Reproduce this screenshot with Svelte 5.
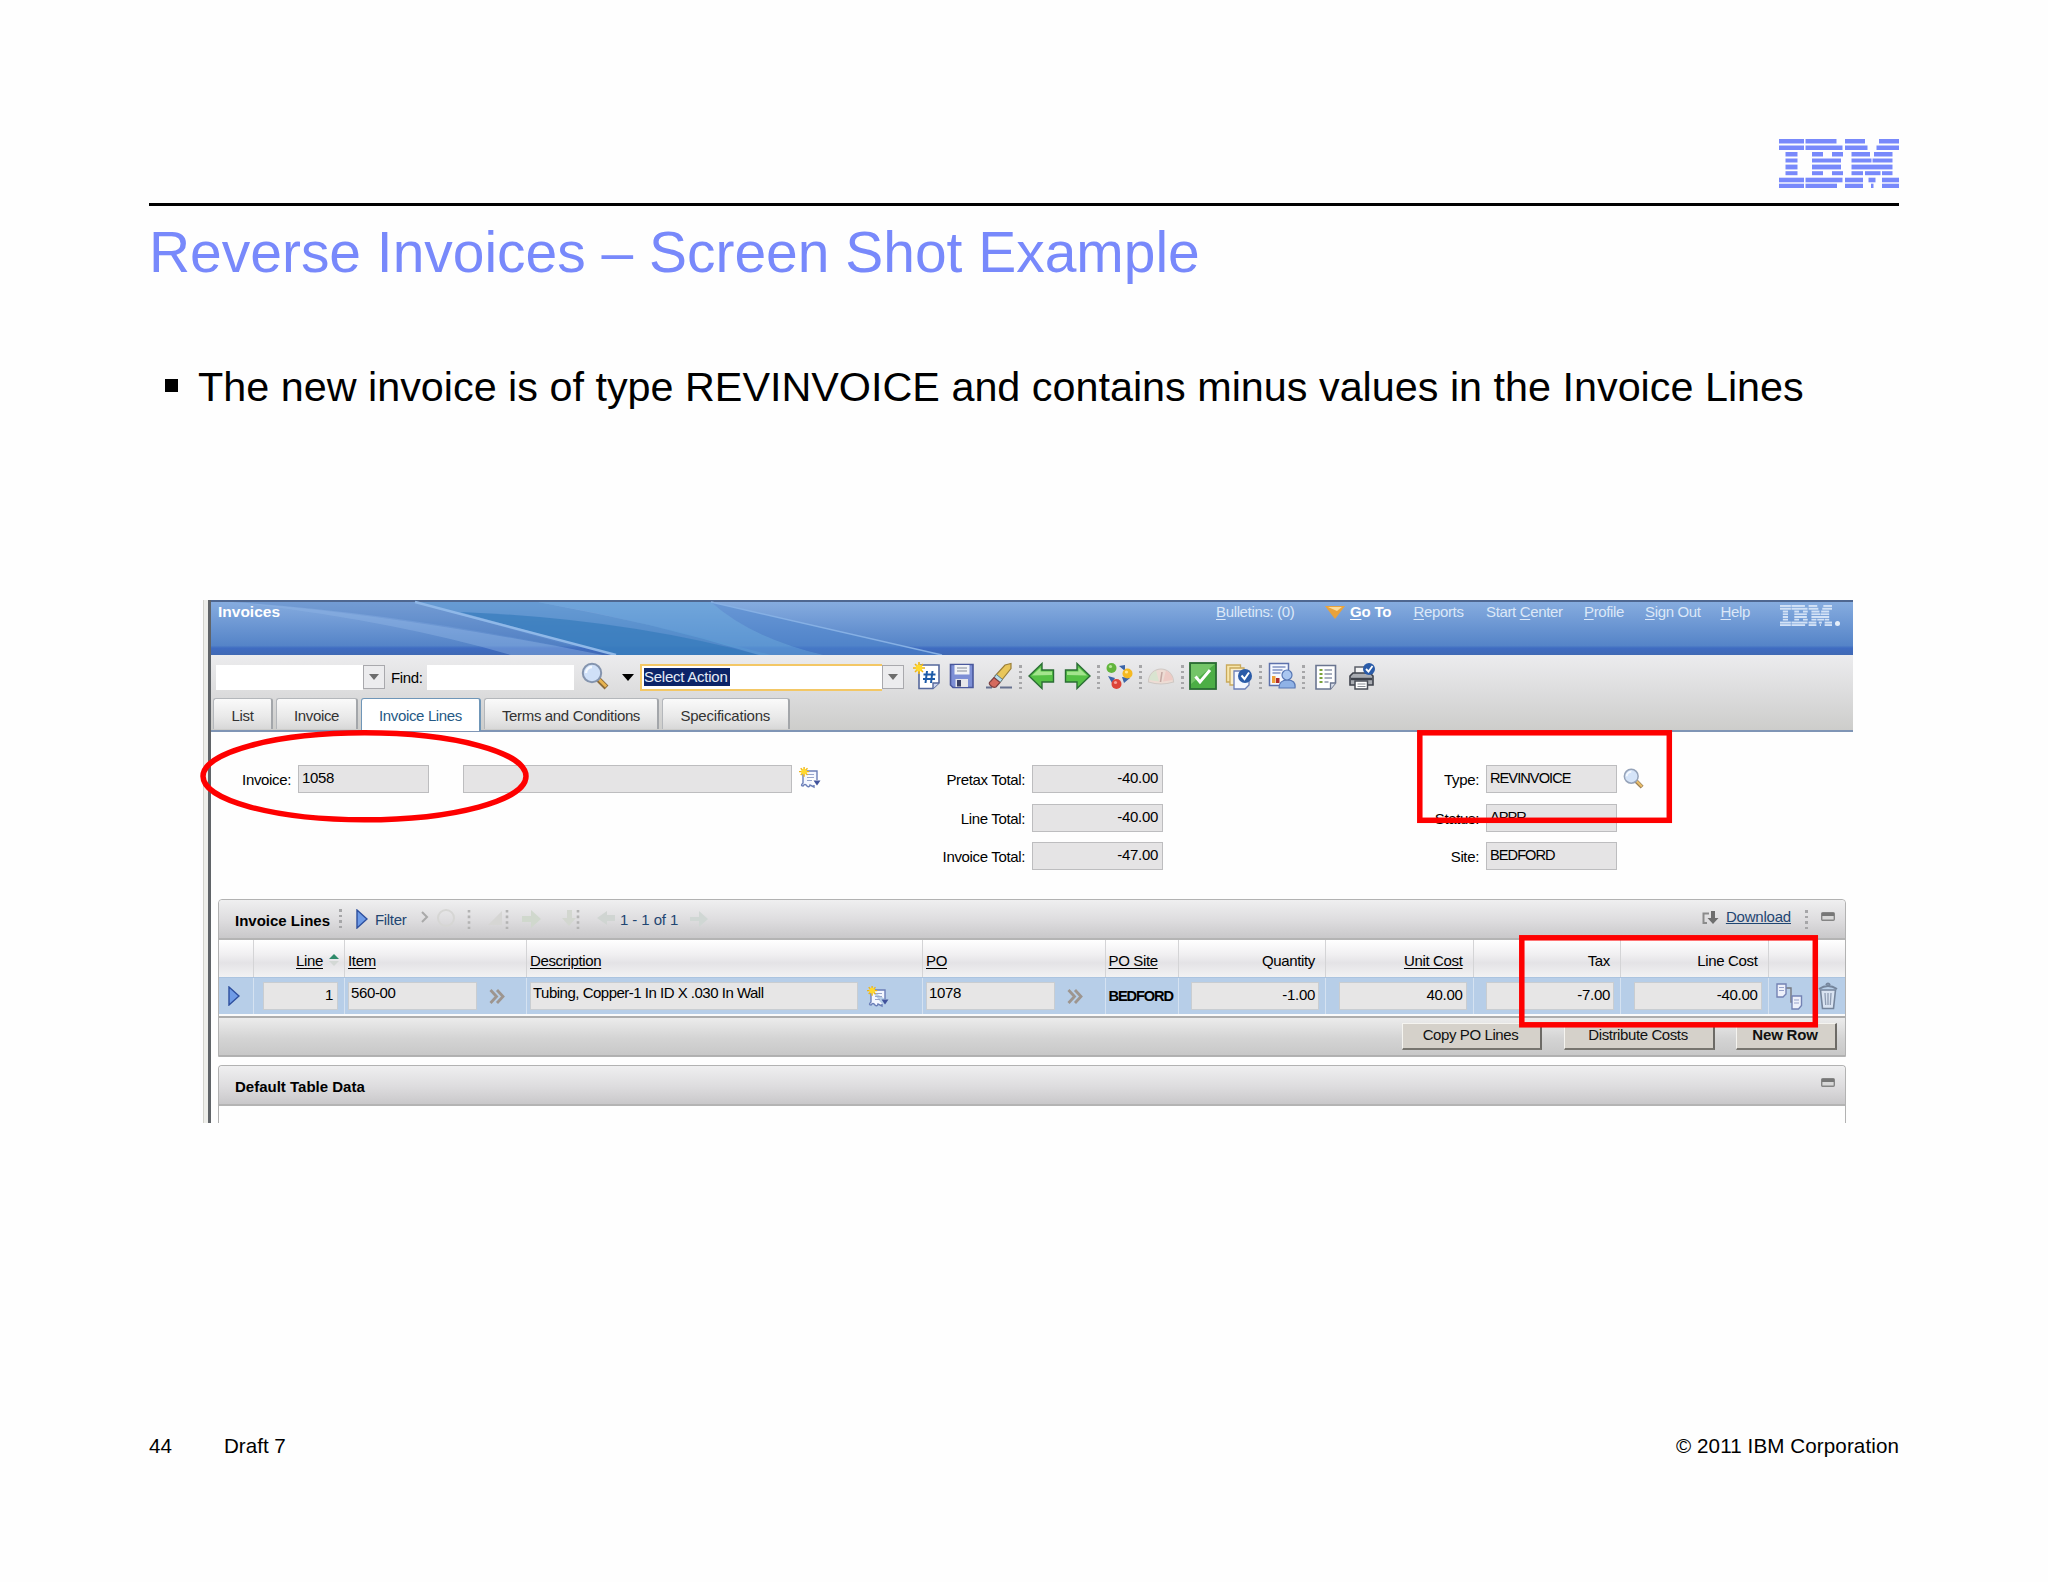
<script>
  const nav = [
    { key: "B", rest: "ulletins: (0)" },
    { key: "G", rest: "o To", bold: true },
    { key: "R", rest: "eports" },
    { pre: "Start ", key: "C", rest: "enter" },
    { key: "P", rest: "rofile" },
    { key: "S", rest: "ign Out" },
    { key: "H", rest: "elp" },
  ];

  const tools = [
    "new",
    "save",
    "eraser",
    "sep",
    "back",
    "forward",
    "sep",
    "workflow",
    "sep",
    "gauge",
    "sep",
    "check",
    "stack",
    "sep",
    "report",
    "sep",
    "list",
    "print",
  ];

  const tabs = [
    { label: "List", size: "w-list" },
    { label: "Invoice", size: "w-invoice" },
    { label: "Invoice Lines", size: "w-lines", active: true },
    { label: "Terms and Conditions", size: "w-terms" },
    { label: "Specifications", size: "w-spec" },
  ];

  const totals = [
    { label: "Pretax Total:", value: "-40.00" },
    { label: "Line Total:", value: "-40.00" },
    { label: "Invoice Total:", value: "-47.00" },
  ];

  const details = [
    { label: "Type:", value: "REVINVOICE", lookup: true },
    { label: "Status:", value: "APPR" },
    { label: "Site:", value: "BEDFORD" },
  ];

  // eight stripes of the logo, as [x, width] runs
  const stripes = [
    { y: 0, h: 4.5, runs: [[0, 25], [26.5, 31], [66, 20], [100, 20]] },
    { y: 6.5, h: 4.5, runs: [[0, 25], [26.5, 37], [66, 22.5], [97.5, 22.5]] },
    { y: 13, h: 4.5, runs: [[6.5, 12], [33, 11], [53, 11], [72.5, 18.5], [95, 18.5]] },
    { y: 19.5, h: 4, runs: [[6.5, 12], [33, 29], [72.5, 20], [93.5, 20]] },
    { y: 25.6, h: 4.8, runs: [[6.5, 12], [33, 29], [72.5, 41]] },
    { y: 32.2, h: 4, runs: [[6.5, 12], [33, 11], [53, 11], [72.5, 11.5], [86, 15.5], [103, 10.5]] },
    { y: 38.7, h: 4.6, runs: [[0, 25], [26.5, 37], [66, 18], [89.5, 7], [103, 17]] },
    { y: 44.7, h: 4.3, runs: [[0, 25], [26.5, 31.5], [66, 18], [92, 2.5], [103, 17]] },
  ];
</script>

{#snippet ibm()}
  <svg class="ibm" viewBox="0 0 120 49" preserveAspectRatio="none">
    {#each stripes as s}
      {#each s.runs as [x, w]}
        <rect {x} y={s.y} width={w} height={s.h} />
      {/each}
    {/each}
  </svg>
{/snippet}

{#snippet star()}
  <path d="M6 0v12M0 6h12M2 2l8 8M10 2l-8 8" stroke="#f0b414" stroke-width="1.6" />
  <circle cx="6" cy="6" r="3.4" fill="#ffd92e" />
{/snippet}

{#snippet note()}
  <svg class="note" viewBox="0 0 22 22">
    <path d="M4 4h14v9M4 4v12q-3 3 0 3q2-3 4 0q2 2 3-1l4 2v-2" fill="#f4f7ff" stroke="#6b7fb8" stroke-width="1.4" />
    <path d="M8 7.5h7M8 10.5h7M8 13.5h5" stroke="#98a6cc" stroke-width="1.2" />
    <path d="M14.500 13.500h7l-3.500 5z" fill="#41539c" />
    <g transform="translate(0 -0.5) scale(.85)">{@render star()}</g>
  </svg>
{/snippet}

{#snippet lens()}
  <svg class="lens" viewBox="0 0 28 28">
    <path d="M17 17l8.5 8.5" stroke="#8a6a3a" stroke-width="5.4" />
    <path d="M17.6 17l7.6 7.6" stroke="#e8b450" stroke-width="2.8" />
    <circle cx="11" cy="11" r="9.2" fill="#cfe0f8" stroke="#8494ae" stroke-width="2" />
    <path d="M5 11a6 6 0 0 1 6-6" stroke="#f4f9ff" stroke-width="2.4" fill="none" />
  </svg>
{/snippet}

{#snippet chevrons()}
  <svg class="chevrons" viewBox="0 0 16 15">
    <path d="M1.5 1l6 6.5-6 6.5M8 1l6 6.5-6 6.5" fill="none" stroke="#9d958f" stroke-width="2.8" />
  </svg>
{/snippet}

{#snippet play()}
  <svg class="play" viewBox="0 0 12 20">
    <path d="M1 1l10 9-10 9z" fill="#6f9be6" stroke="#2d4f9e" stroke-width="1.4" />
  </svg>
{/snippet}

{#snippet minimize()}
  <svg class="minimize" viewBox="0 0 14 9">
    <rect x=".7" y=".7" width="12.6" height="7.6" rx="1" fill="#d8d8d8" stroke="#858585" stroke-width="1.4" />
    <path d="M1 2.5h12" stroke="#777" stroke-width="3" />
  </svg>
{/snippet}

{#snippet arrow()}
  <path d="M1 14L14 1.5V8h11.5v12H14v6.5z" fill="#55c145" stroke="#2b6e35" stroke-width="1.4" />
  <path d="M4 13.5L12.6 5.5V9.5H24v3.5z" fill="#a4e48e" />
{/snippet}

{#snippet tool(name)}
  {#if name === "sep"}
    <span class="sep"></span>
  {:else}
    <svg class="tool {name}" viewBox="0 0 28 28">
      {#if name === "new"}
        <path d="M6 3h20v18l-6 5.5H6z" fill="#fff" stroke="#56689c" stroke-width="1.6" />
        <path d="M26 21h-6v5.5" fill="#cdd7f0" stroke="#56689c" stroke-width="1.4" />
        <path d="M14 9l-1.5 12M19.5 9L18 21M10.5 12.5h12M10 17h12" stroke="#1c5aa8" stroke-width="2" />
        {@render star()}
      {:else if name === "save"}
        <path d="M2.5 2.5h22.5v23H5l-2.500-2.500z" fill="#7d8fd6" stroke="#4a589c" stroke-width="1.6" />
        <path d="M6.5 3h15v9.5h-15z" fill="#f1f3f6" />
        <path d="M9 6h10M9 9h10" stroke="#a9afb8" stroke-width="1.4" />
        <path d="M7.5 17h12.5v8H7.5z" fill="#e6e6ea" />
        <path d="M9 18h4v6.5H9z" fill="#3c4368" />
      {:else if name === "eraser"}
        <path d="M1 25.5h6M15 25.5h12" stroke="#66718f" stroke-width="2" />
        <path d="M20 3l6-1.5v5L16 19l-6-5z" fill="#e9c65a" stroke="#9a7f3a" stroke-width="1.2" />
        <path d="M11.5 12.5l6 5-2.5 3-6-5z" fill="#b9dcea" stroke="#5b7a8a" stroke-width="1" />
        <path d="M9 15.5l6 5-4 4.5q-3 1-5.500-1.500t0-4z" fill="#d56a5e" stroke="#7d4040" stroke-width="1.2" />
      {:else if name === "back"}
        {@render arrow()}
      {:else if name === "forward"}
        <g transform="matrix(-1 0 0 1 28 0)">{@render arrow()}</g>
      {:else if name === "workflow"}
        <path d="M14 4l6 5V3zM3 14l4 7 3-5zM19 21l6-5-8-1z" fill="#3b64a8" />
        <circle cx="6.5" cy="6" r="5" fill="#62b53c" />
        <circle cx="22.5" cy="11.5" r="5" fill="#f5b921" />
        <circle cx="11.5" cy="22" r="5" fill="#dc4338" />
        <circle cx="5.5" cy="4.5" r="1.6" fill="#b7e69a" />
        <circle cx="21.5" cy="10" r="1.6" fill="#ffe795" />
        <circle cx="10.5" cy="20.5" r="1.6" fill="#f7a199" />
      {:else if name === "gauge"}
        <path d="M1.5 20a12.5 13 0 0 1 25 0q-12.500 4-25 0z" fill="#eddcd4" stroke="#cfc8c4" stroke-width="1.2" />
        <path d="M2 18a12 12 0 0 1 7-9.500l3 11z" fill="#d9e4d0" />
        <path d="M19 8.500a12 12 0 0 1 7 9.500l-10 1.500z" fill="#edcbc5" />
        <path d="M13.5 20l1.500-10" stroke="#c5a9a4" stroke-width="1.6" />
      {:else if name === "check"}
        <rect x="1" y="1" width="26" height="26" fill="#4cae45" stroke="#2b6b33" stroke-width="1.8" />
        <path d="M2 2h24L2 22z" fill="#74c568" />
        <path d="M6.5 14.500l4.500 5.500L21 8" fill="none" stroke="#fff" stroke-width="3" />
      {:else if name === "stack"}
        <path d="M1.5 3h14v17h-14z" fill="#f7e6ab" stroke="#c9a95c" stroke-width="1.3" />
        <path d="M5 6h14v17H5z" fill="#faeeca" stroke="#c9a95c" stroke-width="1.3" />
        <path d="M9 9h15v14l-4 4H9z" fill="#f4f7ff" stroke="#6b7fb8" stroke-width="1.3" />
        <circle cx="20" cy="14" r="7" fill="#2a5ba8" />
        <path d="M16.5 13.5l3 3.500 4.500-6.500" fill="none" stroke="#fff" stroke-width="2" />
      {:else if name === "report"}
        <path d="M1.5 1.5h19v22h-19z" fill="#f5f8ff" stroke="#5d71ac" stroke-width="1.5" />
        <path d="M4.5 5h13M4.5 8h10M4.5 11h8" stroke="#8091c2" stroke-width="1.5" />
        <path d="M4 14h3.500v7H4z" fill="#efa13a" />
        <path d="M8 16h3.500v5H8z" fill="#b02b2b" />
        <path d="M11 26q0-8 8.500-8t7.500 8z" fill="#8fb2e6" stroke="#5676b4" stroke-width="1.2" />
        <circle cx="19" cy="13" r="5" fill="#a9c6f0" stroke="#5676b4" stroke-width="1.2" />
      {:else if name === "list"}
        <path d="M4 3.5h19.5V21l-5 6H4z" fill="#fff" stroke="#6a7590" stroke-width="1.6" />
        <path d="M23.5 21h-5v6" fill="#d8deea" stroke="#6a7590" stroke-width="1.3" />
        <path d="M7.5 8h3M7.5 12h3M7.5 16h3M7.5 20h3" stroke="#7aa23c" stroke-width="2.2" />
        <path d="M12.5 8h7.500M12.5 12h7.500M12.5 16h7.500M12.5 20h4" stroke="#8d96ac" stroke-width="1.5" />
      {:else if name === "print"}
        <path d="M7 12V5h12v7" fill="#f5f5f5" stroke="#5b5f68" stroke-width="1.5" />
        <path d="M2 14l3-3h17l3 3v9H2z" fill="#a9acb2" stroke="#3f434c" stroke-width="1.6" />
        <path d="M3 17h21" stroke="#3f434c" stroke-width="2.4" />
        <path d="M7 19h12.500v8H7z" fill="#fff" stroke="#4a4e57" stroke-width="1.5" />
        <path d="M9.5 22h8M9.5 24.500h8" stroke="#8b8f97" stroke-width="1.2" />
        <circle cx="21" cy="7" r="6" fill="#2a5ba8" />
        <path d="M18 7l2.500 2.500 4-5.500" fill="none" stroke="#fff" stroke-width="1.8" />
      {/if}
    </svg>
  {/if}
{/snippet}

<main class="slide">
  <div class="brand">{@render ibm()}</div>
  <div class="rule"></div>
  <h1>Reverse Invoices – Screen Shot Example</h1>
  <div class="bullet">
    <span class="square"></span>
    <p>The new invoice is of type REVINVOICE and contains minus values in the Invoice Lines</p>
  </div>

  <div class="shot">
    <div class="edge"></div>
    <div class="window">
      <header>
        <svg class="swoosh" viewBox="0 0 1642 55" preserveAspectRatio="none">
          <path d="M22 2Q190 15 392 55H300Q180 20 22 2z" fill="#8fb4e4" opacity=".45" />
          <path d="M22 2H204L392 55Q200 14 22 2z" fill="#4a76b8" opacity=".3" />
          <path d="M204 2H327Q444 24 560 55H405z" fill="#4f8ecb" opacity=".55" />
          <path d="M249 12Q410 18 548 55H405z" fill="#3279ba" opacity=".65" />
          <path d="M327 2H500Q540 38 613 55H548Q440 22 327 2z" fill="#62a2d8" opacity=".6" />
          <path d="M500 2L731 55H613Q540 38 500 2z" fill="#4b84cb" opacity=".5" />
          <path d="M204 2L405 55" stroke="#8fb8e8" stroke-width="2.5" />
          <path d="M500 2L731 55" fill="none" stroke="#86b0e4" stroke-width="1.5" />
        </svg>
        <strong>Invoices</strong>
        <nav>
          {#each nav as item}
            <a href="/" class:goto={item.bold}>
              {#if item.bold}
                <svg viewBox="0 0 20 14"><path d="M0 0h20L10 13z" fill="#e9a23b" /><path d="M3 1h14l-5 4z" fill="#fbdc9b" /></svg>
              {/if}
              <span>{item.pre ?? ""}<u>{item.key}</u>{item.rest}</span>
            </a>
          {/each}
        </nav>
        <div class="mini-brand">{@render ibm()}<i></i></div>
      </header>

      <div class="toolbar">
        <div class="row">
          <span class="combo query"><i></i><b></b></span>
          <label for="find">Find:</label>
          <span class="find" id="find"></span>
          {@render lens()}
          <span class="caret"></span>
          <span class="combo action"><i><mark>Select Action</mark></i><b></b></span>
          <div class="tools">
            {#each tools as name}
              {@render tool(name)}
            {/each}
          </div>
        </div>
        <div class="tabs">
          {#each tabs as tab}
            <div class="tab {tab.size}" class:active={tab.active}>{tab.label}</div>
          {/each}
        </div>
      </div>

      <section class="form">
        <div class="group first">
          <span class="label">Invoice:</span>
          <span class="field">1058</span>
          <span class="field long"></span>
          {@render note()}
        </div>
        <div class="group second">
          {#each totals as t}
            <div class="line">
              <span class="label">{t.label}</span>
              <span class="field num">{t.value}</span>
            </div>
          {/each}
        </div>
        <div class="group third">
          {#each details as d}
            <div class="line">
              <span class="label">{d.label}</span>
              <span class="field caps">{d.value}</span>
              {#if d.lookup}{@render lens()}{/if}
            </div>
          {/each}
        </div>
      </section>

      <section class="panel">
        <div class="bar">
          <strong>Invoice Lines</strong>
          <span class="sep s1"></span>
          {@render play()}
          <span class="filter">Filter</span>
          <svg class="ghosts" viewBox="0 0 200 28">
            <path d="M2 7l5 5-5 5" fill="none" stroke="#a9a9a9" stroke-width="2" />
            <circle cx="26" cy="13" r="8" fill="none" stroke="#d6d6d4" stroke-width="2" />
            <path d="M68 20L82 6v14z" fill="#d6d6d4" />
            <path d="M102 11h9V5l10 9-10 9v-6h-9z" fill="#d0d8cd" />
            <path d="M142 13h5V5h5v8h4l-7 8z" fill="#d3d7d0" />
            <path d="M177 13l10-7v4h8v6h-8v4z" fill="#d0d5d2" />
            <path d="M49 5v19M87 5v19M158 5v19" stroke="#b3b3b3" stroke-width="2.6" stroke-dasharray="2.6 3" />
          </svg>
          <span class="count">1 - 1 of 1</span>
          <svg class="next" viewBox="0 0 20 20">
            <path d="M0 8h9V2l9 8-9 8v-6H0z" fill="#d0d7d4" />
          </svg>
          <div class="right">
            <svg class="dl" viewBox="0 0 17 14">
              <path d="M7 2.5H1.5v9.500H5" fill="none" stroke="#8b8b8b" stroke-width="2" />
              <path d="M9 0h4v7h3.500l-5.500 6-5.500-6H9z" fill="#6e6e6e" />
            </svg>
            <a href="/">Download</a>
            <span class="sep"></span>
            {@render minimize()}
          </div>
        </div>

        <div class="grid head">
          <span></span>
          <span class="end line-col"><u>Line</u>
            <svg viewBox="0 0 12 14"><path d="M6 1l5 5H1z" fill="#2f8a6a" /><path d="M6 13l5-5H1z" fill="#d3d8d5" /></svg>
          </span>
          <span><u>Item</u></span>
          <span><u>Description</u></span>
          <span><u>PO</u></span>
          <span><u>PO Site</u></span>
          <span class="end">Quantity</span>
          <span class="end"><u>Unit Cost</u></span>
          <span class="end">Tax</span>
          <span class="end">Line Cost</span>
          <span></span>
        </div>
        <div class="grid data">
          <span class="mark">{@render play()}</span>
          <span class="end narrow"><em class="cell">1</em></span>
          <span><em class="cell ref">560-00</em>{@render chevrons()}</span>
          <span><em class="cell desc">Tubing, Copper-1 In ID X .030 In Wall</em>{@render note()}</span>
          <span><em class="cell ref">1078</em>{@render chevrons()}</span>
          <span><strong>BEDFORD</strong></span>
          <span class="end"><em class="cell num">-1.00</em></span>
          <span class="end"><em class="cell num">40.00</em></span>
          <span class="end"><em class="cell num">-7.00</em></span>
          <span class="end"><em class="cell num">-40.00</em></span>
          <span class="actions">
            <svg class="docs" viewBox="0 0 27 27">
              <path d="M10 5h5v14h3" fill="none" stroke="#76787f" stroke-width="1.4" />
              <path d="M1 1h9v10l-3 3H1z" fill="#eef1fb" stroke="#7483b4" stroke-width="1.4" />
              <path d="M16 13h9.500v9.500l-3 3.500H16z" fill="#eef1fb" stroke="#7483b4" stroke-width="1.4" />
              <path d="M3 4.500h5M3 7.500h5M18 17h5M18 20h5" stroke="#98a4cc" stroke-width="1.2" />
            </svg>
            <svg class="trash" viewBox="0 0 20 28">
              <path d="M2.5 8h15l-2 18.500h-11z" fill="#d9e3f1" stroke="#75859c" stroke-width="1.6" />
              <path d="M1 7q9-6 18 0M8 3q2-3 4 0" fill="none" stroke="#75859c" stroke-width="2" />
              <path d="M7 11l.7 12M10 11v12M13 11l-.7 12" stroke="#8f9db3" stroke-width="1.3" />
            </svg>
          </span>
        </div>
        <div class="buttons">
          <button class="copy">Copy PO Lines</button>
          <button class="distribute">Distribute Costs</button>
          <button class="new-row">New Row</button>
        </div>
      </section>

      <section class="panel empty">
        <div class="bar">
          <strong>Default Table Data</strong>
          <div class="right">{@render minimize()}</div>
        </div>
      </section>
    </div>

    <svg class="callouts" viewBox="0 0 1660 540">
      <ellipse cx="166.5" cy="176.3" rx="161.5" ry="43.5" />
      <rect x="1221.8" y="132.8" width="249.5" height="87.5" />
      <rect x="1323.8" y="337.8" width="293.5" height="87" />
    </svg>
  </div>

  <footer>
    <span class="page">44</span>
    <span>Draft 7</span>
    <span class="copyright">© 2011 IBM Corporation</span>
  </footer>
</main>

<style>
  :global(body) {
    margin: 0;
    background: #fefefe;
  }

  .slide {
    box-sizing: border-box;
    width: 2048px;
    height: 1582px;
    padding: 139px 149px 0;
    overflow: hidden;
    font-family: "Liberation Sans", Arial, sans-serif;
    color: #000;
  }

  .slide :global(svg) {
    display: block;
    flex: none;
  }

  .brand {
    display: flex;
    justify-content: flex-end;
    height: 49px;
  }

  .ibm {
    width: 120px;
    height: 49px;
    fill: #7889fb;
  }

  .rule {
    height: 3px;
    margin-top: 15px;
    background: #000;
  }

  h1 {
    margin: 14px 0 0;
    font-size: 56.95px;
    line-height: 64px;
    font-weight: 400;
    color: #7889fb;
    white-space: nowrap;
  }

  .bullet {
    display: flex;
    margin-top: 79px;
    padding-left: 16px;
  }

  .bullet .square {
    width: 13px;
    height: 13px;
    margin: 16px 20px 0 0;
    background: #000;
  }

  .bullet p {
    margin: 0;
    font-size: 41.33px;
    line-height: 48px;
    white-space: nowrap;
  }

  .shot {
    position: relative;
    display: flex;
    width: 1650px;
    height: 523px;
    margin: 189px 0 0 54px;
    font-size: 15px;
    letter-spacing: -0.35px;
    white-space: nowrap;
  }

  .edge {
    box-sizing: border-box;
    width: 8px;
    background: #eeeeea;
    border-left: 1px solid #d2d2cc;
    border-right: 3px solid #606468;
  }

  .window {
    flex: 1;
    min-width: 0;
    overflow: hidden;
    background: #fefefe;
  }

  header {
    position: relative;
    box-sizing: border-box;
    display: flex;
    height: 55px;
    line-height: 19px;
    color: #dbe8f8;
    border-top: 2px solid #4f6790;
    background: linear-gradient(#86acdf, #5584c8 82%, #3f6cc2 87%, #4069b4);
  }

  .swoosh {
    position: absolute;
    left: 0;
    top: -2px;
    width: 1642px;
    height: 55px;
  }

  header strong {
    position: relative;
    width: 998px;
    padding-left: 7px;
    font-size: 15.5px;
    letter-spacing: 0;
    color: #fff;
  }

  nav {
    position: relative;
    display: grid;
    grid-template-columns: 109px 88.5px 72.5px 98px 61px 75.5px 59px;
  }

  nav a {
    display: flex;
    color: inherit;
    text-decoration: none;
  }

  nav svg {
    width: 20px;
    height: 14px;
    margin: 4px 5px 0 0;
  }

  .goto {
    font-weight: bold;
    color: #fff;
    letter-spacing: -0.2px;
  }

  .mini-brand {
    position: relative;
    display: flex;
    align-items: flex-end;
    height: 24px;
  }

  .mini-brand .ibm {
    width: 52px;
    height: 21px;
    fill: #d3e2f6;
  }

  .mini-brand i {
    width: 5px;
    height: 5px;
    margin-left: 3px;
    border-radius: 50%;
    background: #e6effa;
  }

  .toolbar {
    box-sizing: border-box;
    height: 77px;
    padding: 4px 0 0 2px;
    border-bottom: 2px solid #7f95b5;
    background: linear-gradient(#ececee, #dededf 45%, #cdcdcb);
  }

  .row {
    display: flex;
    align-items: center;
    height: 39px;
    padding-left: 3px;
  }

  .row > * {
    flex: none;
    margin-bottom: 3px;
  }

  .combo {
    display: flex;
  }

  .combo i {
    box-sizing: border-box;
    height: 25px;
    background: #fff;
    font-style: normal;
  }

  .combo b {
    box-sizing: border-box;
    display: flex;
    width: 22px;
    height: 24px;
    align-items: center;
    justify-content: center;
    border: 1px solid #a9a9ad;
    background: #ececee;
  }

  .combo b::after {
    content: "";
    border: 5px solid transparent;
    border-top: 6px solid #6d6d6d;
    border-bottom: 0;
  }

  .query i {
    width: 147px;
  }

  .row label {
    box-sizing: border-box;
    width: 42px;
    padding: 1px 0 0 6px;
  }

  .find {
    width: 147px;
    height: 25px;
    background: #fff;
  }

  .lens {
    width: 28px;
    height: 28px;
  }

  .row .lens {
    margin-left: 7px;
    margin-bottom: 5px;
  }

  .caret {
    margin-left: 13px;
    border: 6.5px solid transparent;
    border-top: 7px solid #000;
    border-bottom: 0;
  }

  .action {
    margin-left: 6px;
  }

  .action i {
    width: 242px;
    height: 27px;
    padding: 2px 0 0 2px;
    border: 2px solid #f3c765;
    border-right: 0;
  }

  .action b {
    margin-top: 1px;
  }

  mark {
    display: block;
    width: 86px;
    height: 18px;
    line-height: 18px;
    color: #e4ebf6;
    background: #0c2468;
    letter-spacing: -0.25px;
  }

  .tools {
    display: flex;
    align-items: center;
    margin: 0 0 6px 9px;
  }

  .tool {
    width: 28px;
    height: 28px;
  }

  .sep {
    width: 3px;
    height: 24px;
    background: repeating-linear-gradient(#a6a6a8 0 2.5px, transparent 2.5px 5.5px);
  }

  .tools .sep {
    margin: 2px 6px 0;
  }

  .save {
    margin-left: 7px;
  }

  .eraser {
    margin-left: 9px;
  }

  .forward {
    margin-left: 7px;
  }

  .stack {
    margin-left: 8px;
  }

  .workflow,
  .gauge,
  .check {
    margin-left: -1px;
  }

  .list {
    margin-left: 1px;
  }

  .print {
    margin-left: 8px;
  }

  .tabs {
    display: flex;
    gap: 3px;
    height: 33px;
  }

  .tab {
    box-sizing: border-box;
    height: 31px;
    padding-top: 7px;
    text-align: center;
    line-height: 20px;
    color: #333;
    border: 1px solid #b4b7bb;
    border-right: 2px solid #a3a6aa;
    border-bottom: 0;
    border-radius: 3px 3px 0 0;
    background: linear-gradient(#fafafa, #e9e9e9 60%, #d8d8d8);
  }

  .tab.active {
    height: 33px;
    color: #255a86;
    border-color: #6f96b8;
    background: #fff;
  }

  .w-list {
    width: 60px;
  }

  .w-invoice {
    width: 82px;
  }

  .w-lines {
    width: 120px;
  }

  .w-terms {
    width: 175px;
  }

  .w-spec {
    width: 127.5px;
    letter-spacing: -0.2px;
  }

  .form {
    display: flex;
    height: 167px;
    padding-top: 33px;
    box-sizing: border-box;
  }

  .group {
    display: flex;
    align-items: flex-start;
  }

  .label {
    box-sizing: border-box;
    padding-top: 5px;
    text-align: right;
    line-height: 20px;
  }

  .field {
    box-sizing: border-box;
    width: 131px;
    height: 28px;
    margin-left: 7px;
    padding: 2px 4px 0 3px;
    line-height: 20px;
    border: 1px solid #bdbdbf;
    background: #e5e4e5;
  }

  .first {
    width: 721px;
  }

  .first .label {
    width: 80px;
  }

  .long {
    width: 329px;
    margin-left: 34px;
  }

  .note {
    width: 22px;
    height: 22px;
    margin: 2px 0 0 7px;
  }

  .second,
  .third {
    flex-direction: column;
    gap: 10.6px;
  }

  .line {
    display: flex;
  }

  .second {
    width: 498px;
  }

  .second .label {
    width: 93px;
  }

  .third .label {
    width: 49px;
  }

  .caps {
    font-size: 14.6px;
    letter-spacing: -0.95px;
  }

  .num {
    text-align: right;
    letter-spacing: -0.3px;
  }

  .third .lens {
    width: 21px;
    height: 21px;
    margin: 3px 0 0 6px;
    opacity: 0.85;
  }

  .panel {
    box-sizing: border-box;
    width: 1628px;
    margin-left: 7px;
    border: 1px solid #b2b2b2;
    border-radius: 4px 4px 0 0;
  }

  .bar {
    box-sizing: border-box;
    display: flex;
    height: 40px;
    padding: 0 10px 0 16px;
    align-items: center;
    border-bottom: 2px solid #b4b4b4;
    border-radius: 4px 4px 0 0;
    background: linear-gradient(#efeff0, #dddcde 55%, #c9c8ca);
  }

  .bar strong {
    padding-top: 3px;
    letter-spacing: 0;
  }

  .s1 {
    height: 20px;
    margin: 0 14px 0 9px;
  }

  .play {
    width: 12px;
    height: 20px;
  }

  .filter,
  .count {
    color: #1f4672;
  }

  .filter {
    width: 31px;
    margin: 0 14px 0 7px;
  }

  .ghosts {
    width: 200px;
    height: 28px;
  }

  .count {
    width: 62px;
    letter-spacing: -0.1px;
  }

  .next {
    width: 20px;
    height: 20px;
    margin-left: 8px;
  }

  .right {
    display: flex;
    margin-left: auto;
    align-items: center;
    padding-bottom: 6px;
  }

  .right a {
    margin: 0 14px 0 7px;
    color: #1f4672;
    letter-spacing: -0.2px;
  }

  .right .sep {
    margin: 7px 13px 0 0;
    height: 20px;
  }

  .dl {
    width: 17px;
    height: 14px;
    margin-top: 4px;
  }

  .minimize {
    width: 14px;
    height: 9px;
  }

  .grid {
    display: grid;
    grid-template-columns: 34.5px 91.5px 182px 396px 182.5px 73px 147.5px 147.5px 147.5px 147.5px 1fr;
  }

  .grid > span {
    box-sizing: border-box;
    display: flex;
    align-items: center;
    padding-left: 3px;
    border-right: 1px solid #d4d4d6;
  }

  .grid > span:last-child {
    border-right: 0;
  }

  .grid > .end {
    justify-content: flex-end;
    padding-right: 10px;
  }

  .head {
    height: 37px;
    background: linear-gradient(#fff, #f0eff1 40%, #e4e3e6 62%, #f2f2f3);
  }

  .head > span {
    padding-top: 3px;
  }

  .head > .line-col {
    padding-right: 4px;
  }

  .head svg {
    width: 12px;
    height: 14px;
    margin-left: 5px;
  }

  u {
    text-underline-offset: 2px;
  }

  .data {
    height: 39px;
    border-top: 1px solid #abc4e0;
    border-bottom: 2px solid #fafafa;
    box-sizing: border-box;
    background: #b7cee8;
  }

  .data > span {
    border-right-color: #d5e2f1;
  }

  .data > .end {
    padding-right: 6px;
  }

  .cell {
    box-sizing: border-box;
    flex: none;
    width: 128px;
    height: 28px;
    padding: 0 3px;
    text-align: right;
    font-style: normal;
    line-height: 23px;
    border: 1px solid #c9cdd1;
    background: #e7e6e6;
  }

  .narrow .cell {
    width: 75px;
    padding-right: 4px;
  }

  .ref {
    width: 129px;
    padding-left: 2px;
    text-align: left;
    line-height: 20px;
  }

  .desc {
    width: 328px;
    padding-left: 2px;
    text-align: left;
    line-height: 20px;
    letter-spacing: -0.5px;
  }

  .data .note {
    margin: 1px 0 0 9px;
  }

  .chevrons {
    width: 16px;
    height: 15px;
    margin: 1px 0 0 12px;
  }

  .data strong {
    font-size: 14.6px;
    letter-spacing: -1.1px;
  }

  .data .mark {
    padding-left: 9px;
  }

  .data .actions {
    padding-left: 7px;
  }

  .docs {
    width: 27px;
    height: 27px;
  }

  .trash {
    width: 20px;
    height: 28px;
    margin-left: 15px;
  }

  .buttons {
    box-sizing: border-box;
    display: flex;
    height: 40px;
    padding: 5px 8px 0 0;
    justify-content: flex-end;
    border-top: 2px solid #adadad;
    border-bottom: 1px solid #b0b0b0;
    background: linear-gradient(#ececec, #d4d4d4 55%, #c8c8c8);
  }

  button {
    height: 27px;
    padding: 0 2px 3px 0;
    font: 15px "Liberation Sans", Arial, sans-serif;
    letter-spacing: -0.4px;
    color: #111;
    border: 1px solid #f5f4f0;
    border-right: 2px solid #6c6a66;
    border-bottom: 2px solid #77756f;
    background: #d5d1ca;
  }

  .copy {
    width: 140px;
  }

  .distribute {
    width: 151px;
    margin-left: 22px;
  }

  .new-row {
    width: 101px;
    margin-left: 21px;
    font-weight: bold;
    letter-spacing: -0.2px;
  }

  .empty {
    height: 62px;
    margin-top: 8px;
    border-bottom: 0;
  }

  .callouts {
    position: absolute;
    left: -5px;
    top: 0;
    width: 1660px;
    height: 540px;
    fill: none;
    stroke: #fe0000;
    stroke-width: 5.5;
  }

  footer {
    display: flex;
    margin-top: 311px;
    font-size: 20.6px;
    line-height: 24px;
  }

  .page {
    width: 75px;
  }

  .copyright {
    margin-left: auto;
    letter-spacing: 0.1px;
  }
</style>
